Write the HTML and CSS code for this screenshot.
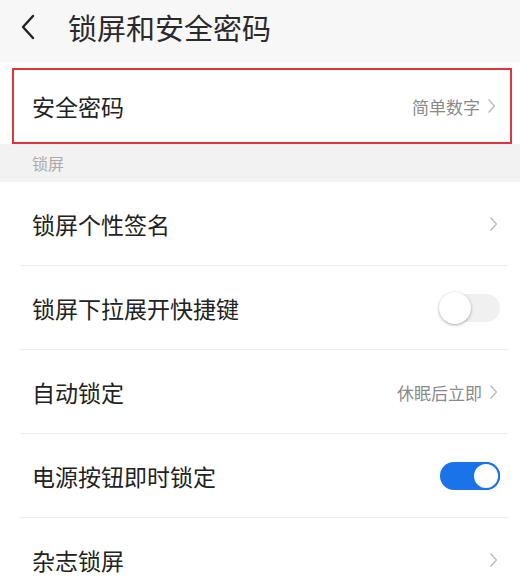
FILE: index.html
```html
<!DOCTYPE html>
<html lang="zh-CN">
<head>
  <meta charset="UTF-8">
  <meta name="viewport" content="width=device-width, initial-scale=1.0">
  <title>锁屏和安全密码</title>
  <link rel="stylesheet" href="styles.css">
</head>
<body>
  <header class="topbar">
    <svg class="back" width="16" height="26" viewBox="0 0 16 26">
      <path d="M13 2 L3 13 L13 24" fill="none" stroke="#222" stroke-width="2.4" stroke-linecap="round" stroke-linejoin="round"/>
    </svg>
    <h1>锁屏和安全密码</h1>
  </header>

  <div class="highlight-wrap">
    <div class="row highlight">
      <span class="label">安全密码</span>
      <span class="value">简单数字<svg class="chev" width="9" height="16" viewBox="0 0 9 16"><path d="M1.5 1.5 L7.5 8 L1.5 14.5" fill="none" stroke="#bbb" stroke-width="1.4"/></svg></span>
    </div>
  </div>

  <div class="section">锁屏</div>

  <div class="list">
    <div class="row">
      <span class="label">锁屏个性签名</span>
      <span class="value"><svg class="chev" width="9" height="16" viewBox="0 0 9 16"><path d="M1.5 1.5 L7.5 8 L1.5 14.5" fill="none" stroke="#bbb" stroke-width="1.4"/></svg></span>
    </div>
    <div class="row">
      <span class="label">锁屏下拉展开快捷键</span>
      <span class="switch"><span class="knob"></span></span>
    </div>
    <div class="row">
      <span class="label">自动锁定</span>
      <span class="value">休眠后立即<svg class="chev" width="9" height="16" viewBox="0 0 9 16"><path d="M1.5 1.5 L7.5 8 L1.5 14.5" fill="none" stroke="#bbb" stroke-width="1.4"/></svg></span>
    </div>
    <div class="row">
      <span class="label">电源按钮即时锁定</span>
      <span class="switch on"><span class="knob"></span></span>
    </div>
    <div class="row">
      <span class="label">杂志锁屏</span>
      <span class="value"><svg class="chev" width="9" height="16" viewBox="0 0 9 16"><path d="M1.5 1.5 L7.5 8 L1.5 14.5" fill="none" stroke="#bbb" stroke-width="1.4"/></svg></span>
    </div>
  </div>
</body>
</html>
```

FILE: styles.css
```css
* {
  box-sizing: border-box;
  margin: 0;
  padding: 0;
}

body {
  font-family: "Noto Sans CJK SC", "Noto Sans", sans-serif;
  background: #fff;
  color: #222;
  width: 520px;
  overflow: hidden;
}

.topbar {
  height: 62px;
  background: #f7f7f7;
  display: flex;
  align-items: center;
  padding: 0 0 8px 20px;
  gap: 32px;
}

.topbar h1 {
  font-size: 29px;
  font-weight: 400;
  color: #2a2a2a;
  line-height: 1;
}

.highlight-wrap {
  padding: 6px 8px 0 12px;
}

.row {
  display: flex;
  align-items: center;
  justify-content: space-between;
  height: 84px;
  padding: 0 22px 0 32px;
  position: relative;
}

.row.highlight {
  height: 76px;
  border: 2px solid #e2343c;
  padding: 0 14px 0 18px;
}

.label {
  font-size: 23px;
  line-height: 1;
}

.value {
  display: flex;
  align-items: center;
  gap: 7px;
  font-size: 17px;
  color: #8a8a8a;
}

.section {
  height: 38px;
  background: #f2f2f2;
  padding-left: 32px;
  font-size: 16px;
  color: #aaa;
  display: flex;
  align-items: center;
}

.list .row::after {
  content: "";
  position: absolute;
  left: 20px;
  right: 12px;
  bottom: 0;
  height: 1px;
  background: #ececec;
}

.list .row:last-child::after {
  display: none;
}

.switch {
  width: 60px;
  height: 28px;
  border-radius: 14px;
  background: #f0f0f0;
  position: relative;
  margin-right: -2px;
}

.switch .knob {
  position: absolute;
  top: -2px;
  left: -1px;
  width: 32px;
  height: 32px;
  border-radius: 50%;
  background: #fff;
  box-shadow: 0 1px 3px rgba(0, 0, 0, 0.35);
}

.switch.on {
  background: #1a73e8;
}

.switch.on .knob {
  left: auto;
  right: 0;
  top: 0;
  width: 28px;
  height: 28px;
  border: 2px solid #1a73e8;
  box-shadow: none;
}
```
